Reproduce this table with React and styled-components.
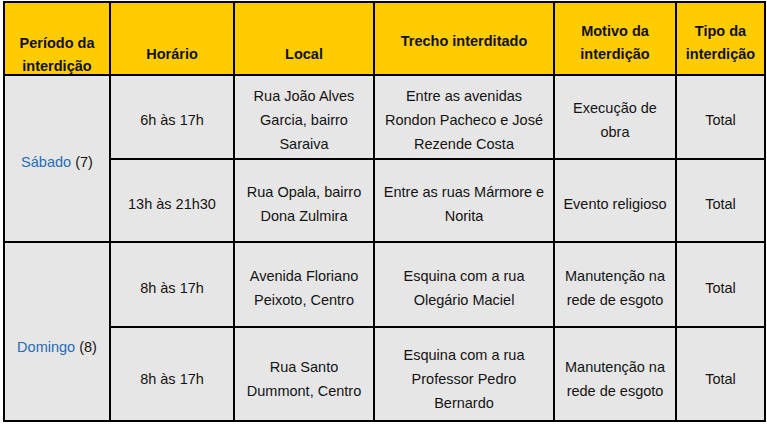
import React from "react";
import styled, { createGlobalStyle } from "styled-components";

const Global = createGlobalStyle`
  html, body { margin: 0; padding: 0; background: #ffffff; }
  body { font-family: "Liberation Sans", Arial, sans-serif; }
`;

const Table = styled.div`
  display: grid;
  grid-template-columns: 104px 122px 138px 178px 120px 87px;
  grid-template-rows: 71px 82px 81px 83px 92px;
  gap: 2px;
  padding: 2px;
  background: #000;
  margin: 1px 0 0 3px;
  width: max-content;
`;

const HeadCell = styled.div`
  background: #ffcc00;
  color: #111;
  font-weight: 700;
  font-size: 14.5px;
  line-height: 23px;
  text-align: center;
  padding-top: ${(p) => p.$top}px;
  overflow: hidden;
  box-sizing: border-box;
`;

const Cell = styled.div`
  background: #e6e6e6;
  color: #141414;
  font-size: 14.5px;
  line-height: 24px;
  display: flex;
  align-items: center;
  justify-content: center;
  text-align: center;
  padding-top: ${(p) => p.$pt ?? 6}px;
  box-sizing: border-box;
  overflow: hidden;
`;

const DayCell = styled(Cell)`
  grid-row: span 2;
`;

const DayName = styled.span`
  color: #276db5;
`;

const Lines = ({ lines }) =>
  lines.map((l, i) => (
    <React.Fragment key={i}>
      {i > 0 && <br />}
      {l}
    </React.Fragment>
  ));

const headers = [
  { lines: ["Período da", "interdição"], top: 29 },
  { lines: ["Horário"], top: 40 },
  { lines: ["Local"], top: 40 },
  { lines: ["Trecho interditado"], top: 27 },
  { lines: ["Motivo da", "interdição"], top: 17 },
  { lines: ["Tipo da", "interdição"], top: 17 },
];

const days = [
  {
    name: "Sábado",
    num: "(7)",
    pt: 7,
    rows: [
      {
        pt: 6,
        cells: [
          ["6h às 17h"],
          ["Rua João Alves", "Garcia, bairro", "Saraiva"],
          ["Entre as avenidas", "Rondon Pacheco e José", "Rezende Costa"],
          ["Execução de", "obra"],
          ["Total"],
        ],
      },
      {
        pt: 6,
        cells: [
          ["13h às 21h30"],
          ["Rua Opala, bairro", "Dona Zulmira"],
          ["Entre as ruas Mármore e", "Norita"],
          ["Evento religioso"],
          ["Total"],
        ],
      },
    ],
  },
  {
    name: "Domingo",
    num: "(8)",
    pt: 31,
    rows: [
      {
        pt: 7,
        cells: [
          ["8h às 17h"],
          ["Avenida Floriano", "Peixoto, Centro"],
          ["Esquina com a rua", "Olegário Maciel"],
          ["Manutenção na", "rede de esgoto"],
          ["Total"],
        ],
      },
      {
        pt: 9,
        cells: [
          ["8h às 17h"],
          ["Rua Santo", "Dummont, Centro"],
          ["Esquina com a rua", "Professor Pedro", "Bernardo"],
          ["Manutenção na", "rede de esgoto"],
          ["Total"],
        ],
      },
    ],
  },
];

export default function App() {
  return (
    <>
      <Global />
      <Table>
        {headers.map((h, i) => (
          <HeadCell key={"h" + i} $top={h.top}>
            <Lines lines={h.lines} />
          </HeadCell>
        ))}
        {days.map((d) => (
          <React.Fragment key={d.name}>
            <DayCell $pt={d.pt}>
              <span>
                <DayName>{d.name}</DayName> {d.num}
              </span>
            </DayCell>
            {d.rows.map((r, ri) =>
              r.cells.map((c, ci) => (
                <Cell key={d.name + ri + "-" + ci} $pt={r.pt}>
                  <span>
                    <Lines lines={c} />
                  </span>
                </Cell>
              ))
            )}
          </React.Fragment>
        ))}
      </Table>
    </>
  );
}
